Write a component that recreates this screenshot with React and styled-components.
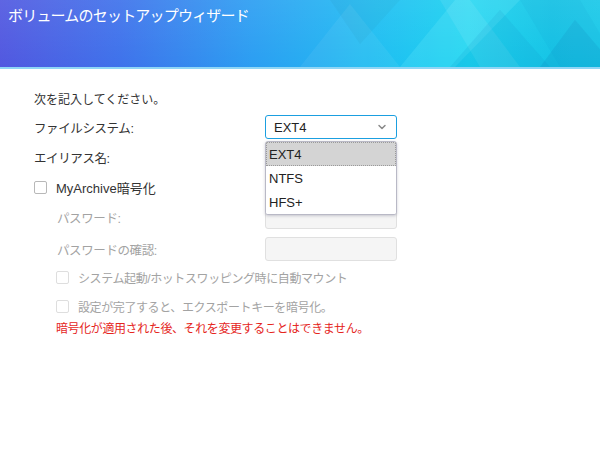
import * as React from 'react';
import styled, { createGlobalStyle } from 'styled-components';
import { ChevronDown } from 'lucide-react';

const GlobalStyle = createGlobalStyle`
  html, body {
    margin: 0;
    padding: 0;
    background: #fff;
  }
  body {
    font-family: "Liberation Sans", "Noto Sans CJK JP", sans-serif;
    font-size: 13px;
    color: #333;
  }
`;

const fileSystems = ['EXT4', 'NTFS', 'HFS+'];

const Decoration = () => (
  <DecoSvg viewBox="0 0 600 68" preserveAspectRatio="none">
    <polygon points="300,68 350,4 400,68" fill="#ffffff" opacity="0.06" />
    <polygon points="330,0 400,0 360,45" fill="#000" opacity="0.03" />
    <polygon points="400,68 455,0 520,0 455,68" fill="#7ff4ff" opacity="0.18" />
    <polygon points="440,0 470,0 520,68 480,68" fill="#ffffff" opacity="0.08" />
    <polygon points="450,68 500,10 550,68" fill="#0b8fc4" opacity="0.14" />
    <polygon points="520,0 580,0 620,68 560,68" fill="#0a9bcc" opacity="0.12" />
    <polygon points="540,68 575,20 600,50 600,68" fill="#086fb0" opacity="0.15" />
  </DecoSvg>
);

const App = () => (
  <Page>
    <GlobalStyle />
    <Header>
      <Decoration />
      <Title>ボリュームのセットアップウィザード</Title>
    </Header>
    <Form>
      <Intro>次を記入してください。</Intro>
      <Row $gap={6}>
        <Label>ファイルシステム:</Label>
        <SelectWrap>
          <Select>
            <span>EXT4</span>
            <ChevronDown size={12} strokeWidth={3} color="#8a8a8a" />
          </Select>
          <Menu>
            {fileSystems.map((fs, i) => (
              <MenuItem key={fs} $active={i === 0}>
                {fs}
              </MenuItem>
            ))}
          </Menu>
        </SelectWrap>
      </Row>
      <Row $gap={6}>
        <Label>エイリアス名:</Label>
        <Input />
      </Row>
      <CheckRow $gap={6} $height={24}>
        <Box />
        <CheckText>MyArchive暗号化</CheckText>
      </CheckRow>
      <Row $gap={6} $indent>
        <Label $disabled>パスワード:</Label>
        <Input $disabled />
      </Row>
      <Row $gap={8} $indent>
        <Label $disabled>パスワードの確認:</Label>
        <Input $disabled />
      </Row>
      <CheckRow $gap={6} $height={20} $indent>
        <Box $disabled />
        <CheckText $disabled>システム起動/ホットスワッピング時に自動マウント</CheckText>
      </CheckRow>
      <CheckRow $gap={9} $height={20} $indent>
        <Box $disabled />
        <CheckText $disabled>設定が完了すると、エクスポートキーを暗号化。</CheckText>
      </CheckRow>
      <Warning>暗号化が適用された後、それを変更することはできません。</Warning>
    </Form>
  </Page>
);

export default App;

const Page = styled.div`
  width: 600px;
  height: 450px;
  background: #fff;
  overflow: hidden;
`;

const Header = styled.header`
  position: relative;
  height: 67px;
  overflow: hidden;
  background: linear-gradient(
    90deg,
    #5158e0 0%,
    #3e72eb 20%,
    #2b9ef2 42%,
    #1fbdf2 62%,
    #1ad2ef 78%,
    #14c4e6 92%,
    #19c8e8 100%
  );
  border-bottom: 2px solid #8fd6f6;

  &::after {
    content: '';
    position: absolute;
    inset: 0;
    background: linear-gradient(180deg, rgba(255, 255, 255, 0.08), rgba(255, 255, 255, 0));
    pointer-events: none;
  }
`;

const DecoSvg = styled.svg`
  position: absolute;
  inset: 0;
  width: 100%;
  height: 100%;
`;

const Title = styled.h1`
  position: relative;
  margin: 0;
  padding: 5px 0 0 8px;
  font-family: "Noto Sans CJK JP", sans-serif;
  font-size: 15px;
  font-weight: 400;
  line-height: 20px;
  letter-spacing: -0.8px;
  color: #fff;
`;

const Form = styled.div`
  display: flex;
  flex-direction: column;
  padding: 22px 0 0 34px;
`;

const jp = `
  font-family: "Liberation Sans", "Noto Sans CJK JP", sans-serif;
  font-size: 12px;
  letter-spacing: -0.4px;
`;

const Intro = styled.div`
  ${jp}
  line-height: 18px;
  letter-spacing: 0;
`;

const Row = styled.div`
  display: grid;
  grid-template-columns: ${({ $indent }) => ($indent ? '208px' : '231px')} 132px;
  align-items: center;
  height: 24px;
  margin-top: ${({ $gap }) => $gap}px;
  padding-left: ${({ $indent }) => ($indent ? '23px' : '0')};
`;

const Label = styled.span`
  ${jp}
  font-size: 12.5px;
  color: ${({ $disabled }) => ($disabled ? '#a3a3a3' : '#333')};
`;

const SelectWrap = styled.div`
  position: relative;
  height: 24px;
`;

const Select = styled.div`
  box-sizing: border-box;
  height: 24px;
  display: flex;
  align-items: center;
  justify-content: space-between;
  padding: 0 8px 0 8px;
  border: 1px solid #1b9fe0;
  border-radius: 3px;
  background: #fff;
  color: #222;
`;

const Menu = styled.div`
  position: absolute;
  top: 26px;
  left: 0;
  right: 0;
  z-index: 2;
  box-sizing: border-box;
  border: 1px solid #b9b9c6;
  border-radius: 3px;
  background: #fff;
  box-shadow: 0 1px 3px rgba(60, 60, 90, 0.25);
  overflow: hidden;
`;

const MenuItem = styled.div`
  box-sizing: border-box;
  height: 24px;
  display: flex;
  align-items: center;
  padding-left: 2px;
  color: #222;
  background: ${({ $active }) => ($active ? '#d4d4d4' : '#fff')};
  border: 1px dotted ${({ $active }) => ($active ? '#9a9a9a' : 'transparent')};
`;

const Input = styled.div`
  box-sizing: border-box;
  height: 24px;
  border: 1px solid ${({ $disabled }) => ($disabled ? '#e0e0e0' : '#c8c8c8')};
  border-radius: 3px;
  background: ${({ $disabled }) => ($disabled ? '#f5f5f5' : '#fff')};
`;

const CheckRow = styled.label`
  display: flex;
  align-items: center;
  gap: 9px;
  height: ${({ $height }) => $height}px;
  margin-top: ${({ $gap }) => $gap}px;
  padding-left: ${({ $indent }) => ($indent ? '22px' : '0')};
`;

const Box = styled.span`
  box-sizing: border-box;
  width: 13px;
  height: 13px;
  border: 1px solid ${({ $disabled }) => ($disabled ? '#dedede' : '#b8b8b8')};
  border-radius: 2px;
  background: #fff;
`;

const CheckText = styled.span`
  ${jp}
  font-size: ${({ $disabled }) => ($disabled ? '12px' : '13px')};
  letter-spacing: ${({ $disabled }) => ($disabled ? '-0.4px' : '0')};
  color: ${({ $disabled }) => ($disabled ? '#a3a3a3' : '#333')};
`;

const Warning = styled.div`
  ${jp}
  margin-top: 4px;
  padding-left: 22px;
  line-height: 18px;
  color: #e5261d;
`;
